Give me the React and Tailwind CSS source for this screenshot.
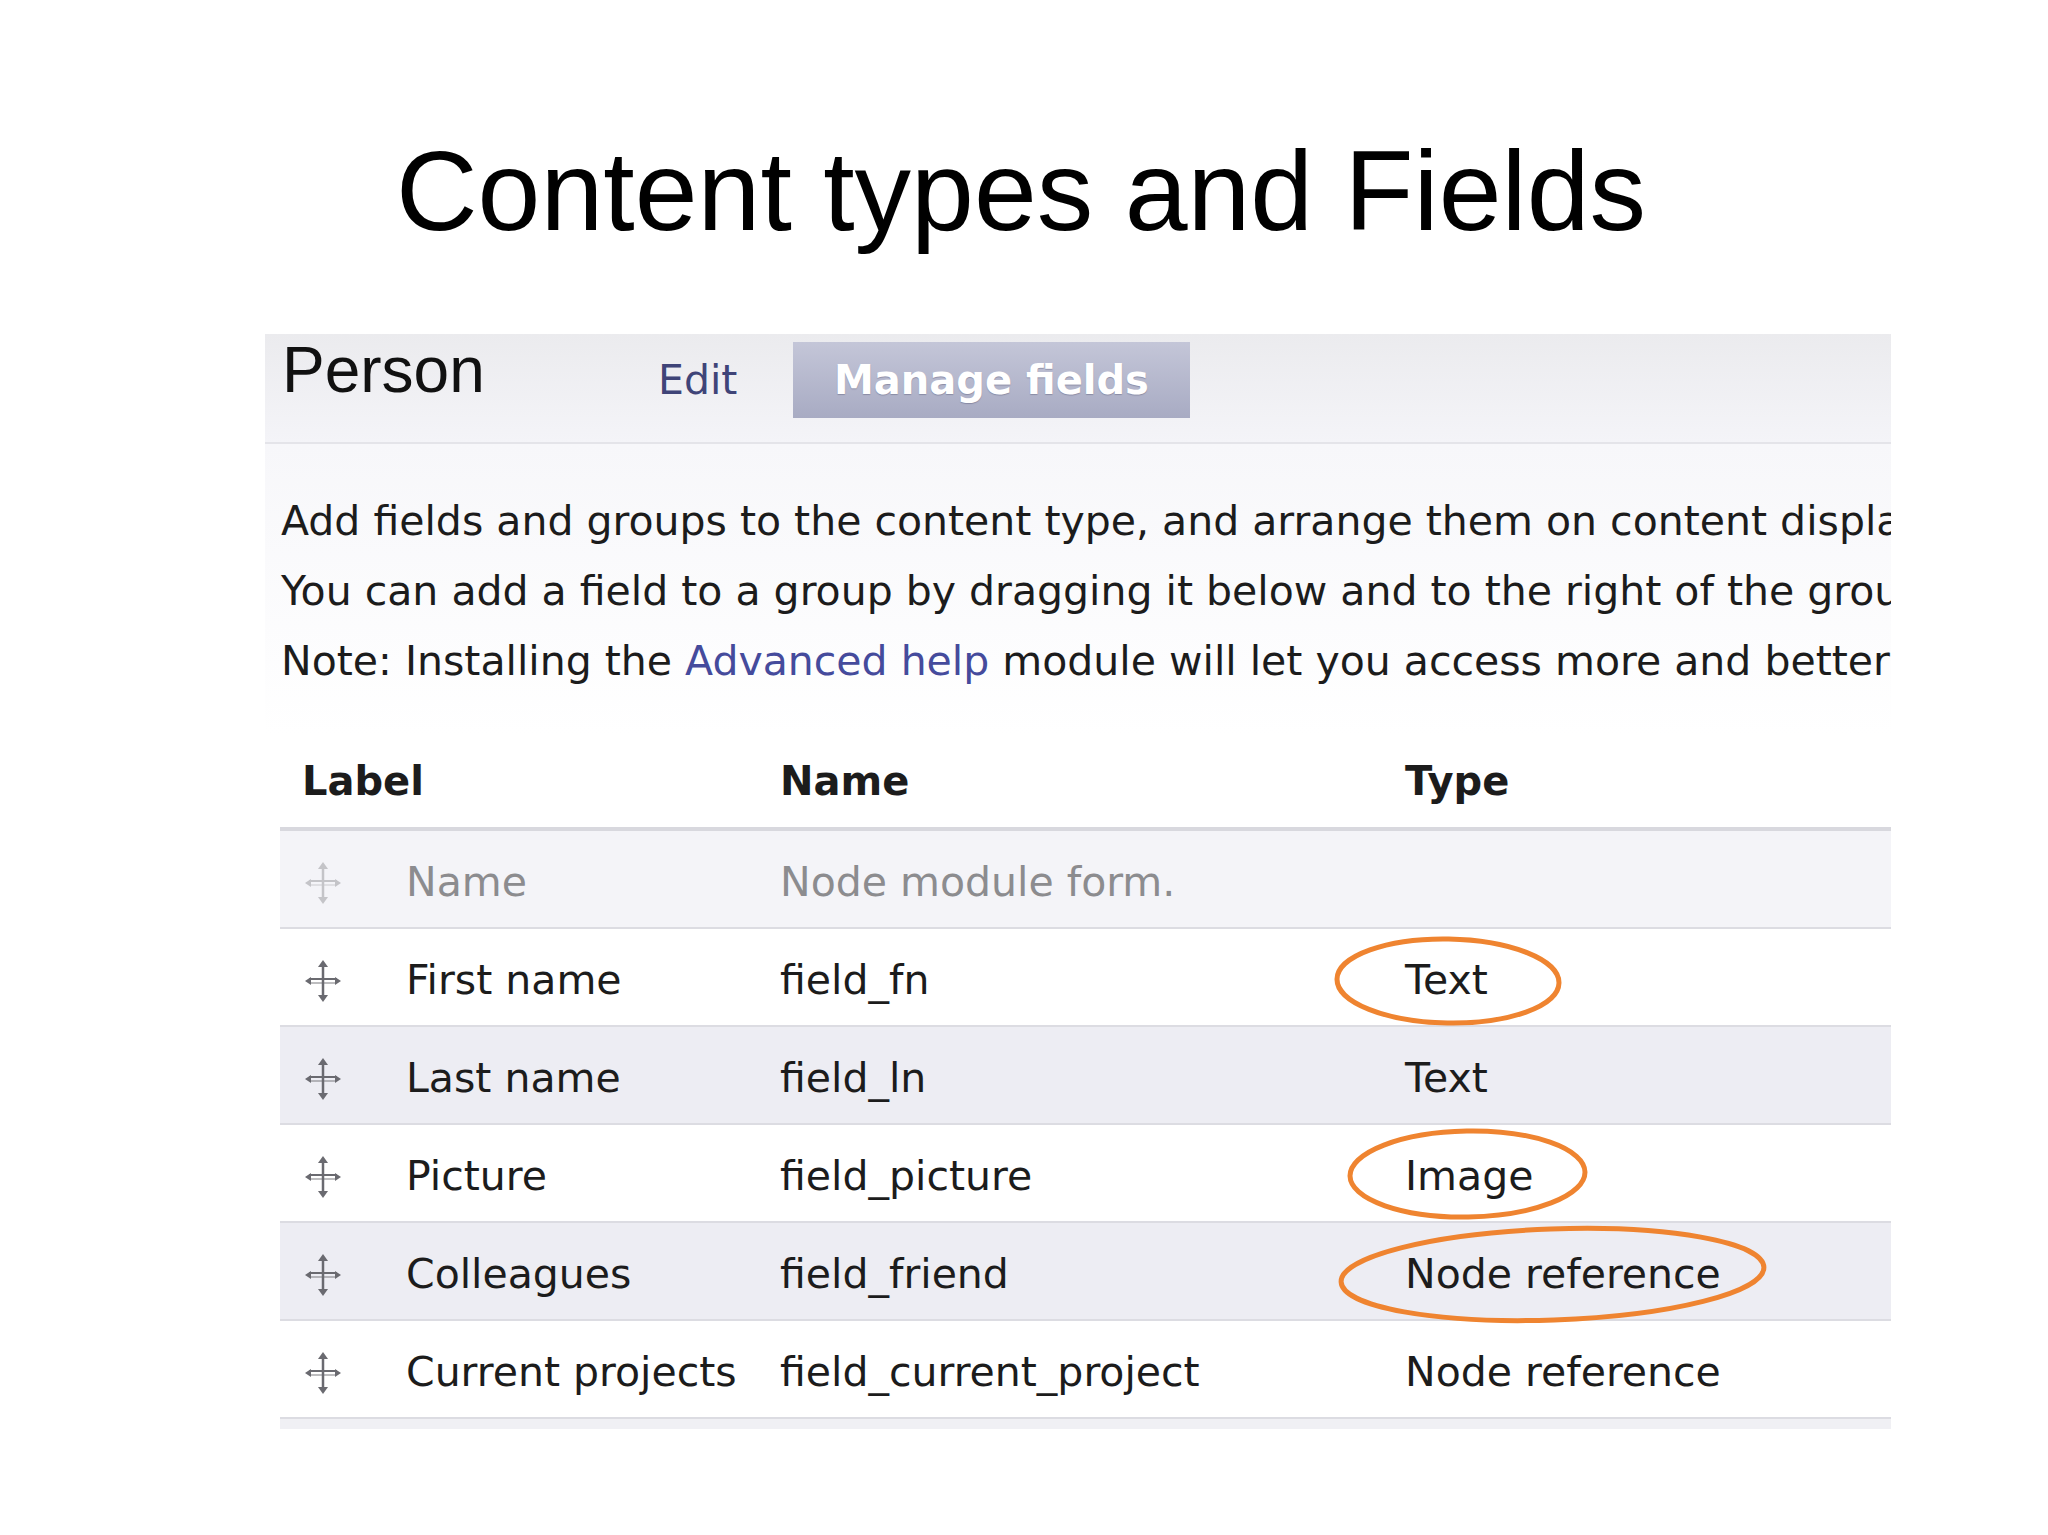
import React from 'react';

const rows = [
    { label: 'Name', name: 'Node module form.', type: '', muted: true, bg: 'bg-[#f4f4f8]' },
    { label: 'First name', name: 'field_fn', type: 'Text', bg: 'bg-white', ring: { left: -72, top: -2, w: 230, h: 92, tilt: 1 } },
    { label: 'Last name', name: 'field_ln', type: 'Text', bg: 'bg-[#ededf3]' },
    { label: 'Picture', name: 'field_picture', type: 'Image', bg: 'bg-white', ring: { left: -59, top: -6, w: 243, h: 94, tilt: -1 } },
    { label: 'Colleagues', name: 'field_friend', type: 'Node reference', bg: 'bg-[#ededf3]', ring: { left: -68, top: -6, w: 431, h: 99, tilt: -2 } },
    { label: 'Current projects', name: 'field_current_project', type: 'Node reference', bg: 'bg-white' },
];

function DragHandle({ muted }) {
    const c = muted ? '#c4c4c8' : '#6a6a70';
    return (
        <svg width="40" height="44" viewBox="0 0 40 44" fill="none">
            <line x1="20" y1="6" x2="20" y2="38" stroke={c} strokeWidth="2.5" />
            <line x1="6" y1="20" x2="34" y2="20" stroke={c} strokeWidth="2" />
            <line x1="8" y1="24" x2="32" y2="24" stroke={c} strokeWidth="1.5" opacity="0.6" />
            <path d="M20 1 L15 8 L25 8 Z" fill={c} />
            <path d="M20 43 L15 36 L25 36 Z" fill={c} />
            <path d="M2 22 L8 18 L8 26 Z" fill={c} />
            <path d="M38 22 L32 18 L32 26 Z" fill={c} />
        </svg>
    );
}

function Ring({ left, top, w, h, tilt }) {
    return (
        <svg
            className="absolute pointer-events-none"
            style={{ left, top }}
            width={w}
            height={h}
            viewBox={`0 0 ${w} ${h}`}
            fill="none"
        >
            <ellipse
                cx={w / 2}
                cy={h / 2}
                rx={w / 2 - 4}
                ry={h / 2 - 4}
                stroke="#ef8430"
                strokeWidth="5"
                transform={`rotate(${tilt} ${w / 2} ${h / 2})`}
            />
        </svg>
    );
}

export default function App() {
    return (
        <div className="min-h-[1535px] bg-white text-[#1c1c1c]">
            <h1 className="pt-[126px] pl-[396px] font-['Liberation_Sans',Arial,sans-serif] text-[113px] leading-[130px] text-black">
                Content types and Fields
            </h1>

            <div className="mt-[78px] ml-[265px] w-[1626px] overflow-hidden font-['DejaVu_Sans',Verdana,sans-serif]">
                <div className="h-[110px] flex items-start bg-gradient-to-b from-[#ebebee] to-[#f4f4f8] border-b-2 border-[#e4e4e9]">
                    <div className="w-[393px] pl-[17px] font-['Liberation_Sans',Arial,sans-serif] text-[64px] leading-[72px] text-[#111]">
                        Person
                    </div>
                    <div className="w-[135px] pt-[22px] text-[41px] leading-[48px] text-[#3f4478]">Edit</div>
                    <div className="mt-[8px] w-[397px] h-[76px] flex items-center justify-center bg-gradient-to-b from-[#c4c6d8] to-[#a8abc3] text-white font-bold text-[40px] [text-shadow:0_1px_1px_rgba(80,80,110,0.4)]">
                        Manage fields
                    </div>
                </div>

                <div className="pt-[42px] pl-[16px] pb-[39px] bg-gradient-to-b from-[#f7f7fa] to-white whitespace-nowrap text-[41px] leading-[70px]">
                    <p>Add fields and groups to the content type, and arrange them on content display.</p>
                    <p>You can add a field to a group by dragging it below and to the right of the group.</p>
                    <p>
                        Note: Installing the <span className="text-[#454b9c]">Advanced help</span> module will let you access more and better help.
                    </p>
                </div>

                <div className="ml-[15px]">
                    <div className="h-[96px] flex items-center border-b-4 border-[#d8d8de] font-bold text-[40px]">
                        <div className="w-[500px] pl-[22px]">Label</div>
                        <div className="w-[625px]">Name</div>
                        <div>Type</div>
                    </div>

                    {rows.map((r) => (
                        <div
                            key={r.label}
                            className={`h-[98px] pt-[8px] flex items-center border-b-2 border-[#dcdce2] text-[41px] ${r.bg} ${r.muted ? 'text-[#8c8c8f]' : 'text-[#1c1c1c]'}`}
                        >
                            <div className="w-[126px] pl-[23px] flex items-center">
                                <DragHandle muted={r.muted} />
                            </div>
                            <div className="w-[374px]">{r.label}</div>
                            <div className="w-[625px]">{r.name}</div>
                            <div className="relative h-full flex items-center">
                                {r.type}
                                {r.ring && <Ring {...r.ring} />}
                            </div>
                        </div>
                    ))}
                    <div className="h-[10px] bg-[#f0f0f4]" />
                </div>
            </div>
        </div>
    );
}
